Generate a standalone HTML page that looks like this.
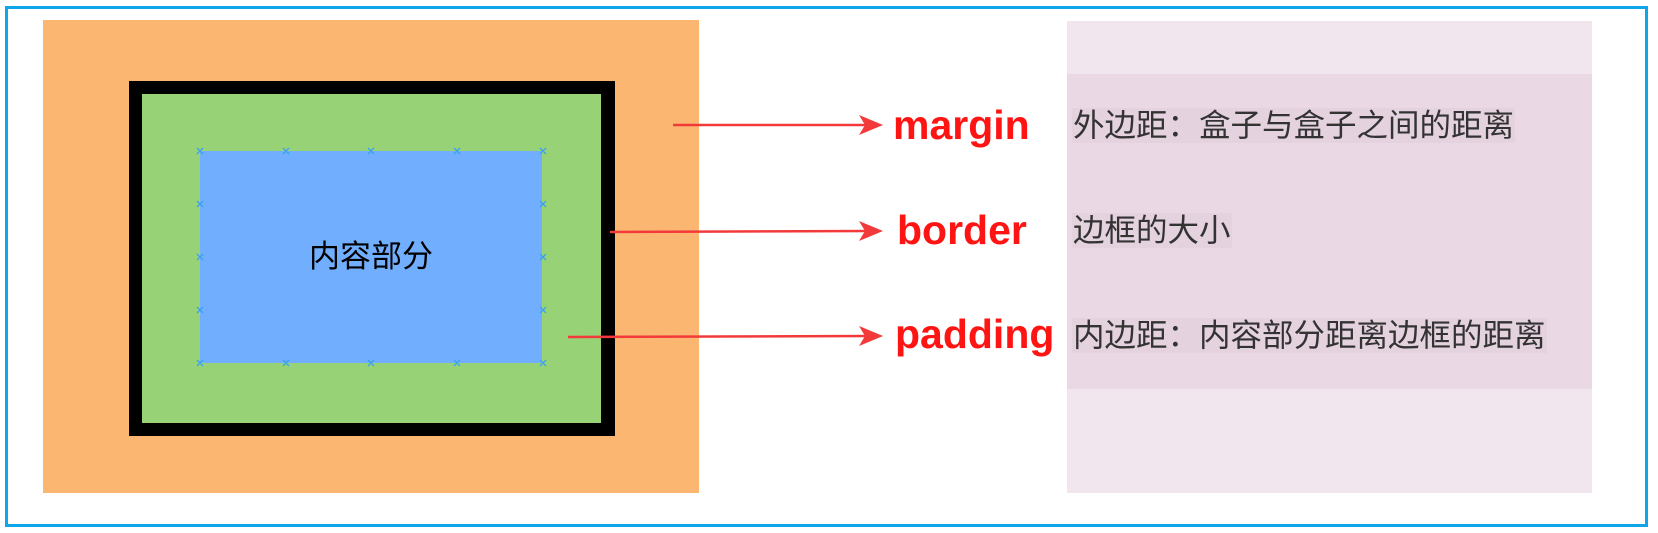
<!DOCTYPE html>
<html><head><meta charset="utf-8"><style>
html,body{margin:0;padding:0;width:1658px;height:533px;background:#fff;overflow:hidden;position:relative;font-family:"Liberation Sans","Noto Sans CJK SC",sans-serif}
div{position:absolute;box-sizing:border-box}
.lab{font-weight:bold;color:#ff1414;font-size:41px;line-height:1;white-space:nowrap}
.cn{color:#333;font-size:31px;line-height:35px;height:35px;background:#e5d2df;white-space:nowrap;padding:0 1px}
</style></head><body>
<div style="left:5px;top:6px;width:1643px;height:521px;border:3px solid #0ea5e9"></div>
<div style="left:43px;top:20px;width:656px;height:473px;background:#fbb771"></div>
<div style="left:129px;top:81px;width:486px;height:355px;background:#000"></div>
<div style="left:142px;top:94px;width:459px;height:329px;background:#98d277"></div>
<div style="left:200px;top:151px;width:342px;height:212px;background:#71aefd"></div>
<div style="left:200px;top:238px;width:342px;text-align:center;font-size:31px;line-height:38px;color:#000">内容部分</div>
<div style="left:1067px;top:21px;width:525px;height:472px;background:#f1e5ee"></div>
<div style="left:1067px;top:74px;width:525px;height:315px;background:#ead9e5"></div>
<div class="cn" style="left:1072px;top:108px;font-size:31.5px">外边距：盒子与盒子之间的距离</div>
<div class="cn" style="left:1072px;top:213px;font-size:31.5px">边框的大小</div>
<div class="cn" style="left:1072px;top:318px;font-size:31.5px">内边距：内容部分距离边框的距离</div>
<div class="lab" style="left:893px;top:105px">margin</div>
<div class="lab" style="left:897px;top:210px">border</div>
<div class="lab" style="left:895px;top:314px">padding</div>
<svg style="position:absolute;left:0;top:0" width="1658" height="533">
<g stroke="#f23a3a" stroke-width="2.5" fill="none">
<line x1="673" y1="125" x2="870" y2="125"/>
<line x1="610" y1="232" x2="870" y2="231"/>
<line x1="568" y1="337" x2="870" y2="336"/>
</g>
<g fill="#f23a3a">
<polygon points="883,125 859,115 865,125 859,135"/>
<polygon points="883,231 859,221 865,231 859,241"/>
<polygon points="883,336 859,326 865,336 859,346"/>
</g>
<g stroke="#3aa0f0" stroke-width="1.3">
<path d="M197 148l6 6M203 148l-6 6M283 148l6 6M289 148l-6 6M368 148l6 6M374 148l-6 6M454 148l6 6M460 148l-6 6M540 148l6 6M546 148l-6 6"/>
<path d="M197 360l6 6M203 360l-6 6M283 360l6 6M289 360l-6 6M368 360l6 6M374 360l-6 6M454 360l6 6M460 360l-6 6M540 360l6 6M546 360l-6 6"/>
<path d="M197 201l6 6M203 201l-6 6M197 254l6 6M203 254l-6 6M197 307l6 6M203 307l-6 6"/>
<path d="M540 201l6 6M546 201l-6 6M540 254l6 6M546 254l-6 6M540 307l6 6M546 307l-6 6"/>
</g>
</svg>
</body></html>
